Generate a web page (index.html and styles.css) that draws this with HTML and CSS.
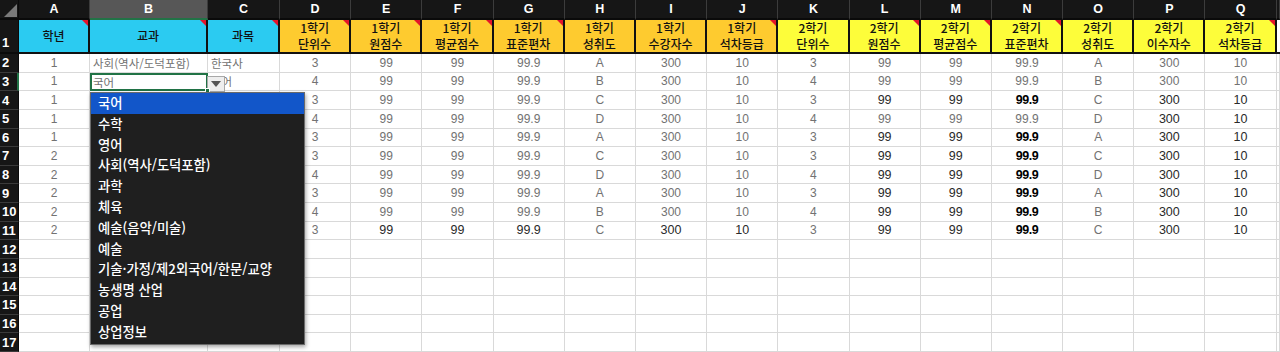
FILE: index.html
```html
<!DOCTYPE html>
<html lang="ko">
<head>
<meta charset="utf-8">
<title>Sheet</title>
<link rel="stylesheet" href="styles.css">
</head>
<body>
<div class="sheet">
  <div class="corner"><svg width="19" height="20" viewBox="0 0 19 20"><polygon points="17,4 17,17 4,17" fill="#7a7a7a"/></svg></div>
  <div class="ch">A</div><div class="ch sel">B</div><div class="ch">C</div><div class="ch">D</div><div class="ch">E</div><div class="ch">F</div><div class="ch">G</div><div class="ch">H</div><div class="ch">I</div><div class="ch">J</div><div class="ch">K</div><div class="ch">L</div><div class="ch">M</div><div class="ch">N</div><div class="ch">O</div><div class="ch">P</div><div class="ch">Q</div><div class="ch"></div>

  <div class="rh r1">1</div>
  <div class="h cy cm">학년</div>
  <div class="h cy cm">교과</div>
  <div class="h cy cm">과목</div>
  <div class="h or cm">1학기<br>단위수</div>
  <div class="h or cm">1학기<br>원점수</div>
  <div class="h or cm">1학기<br>평균점수</div>
  <div class="h or cm">1학기<br>표준편차</div>
  <div class="h or">1학기<br>성취도</div>
  <div class="h or">1학기<br>수강자수</div>
  <div class="h or cm">1학기<br>석차등급</div>
  <div class="h ye">2학기<br>단위수</div>
  <div class="h ye cm">2학기<br>원점수</div>
  <div class="h ye cm">2학기<br>평균점수</div>
  <div class="h ye cm">2학기<br>표준편차</div>
  <div class="h ye">2학기<br>성취도</div>
  <div class="h ye">2학기<br>이수자수</div>
  <div class="h ye cm">2학기<br>석차등급</div>
  <div class="h blank"></div>

  <div class="rh">2</div>
  <div class="c">1</div><div class="c l">사회(역사/도덕포함)</div><div class="c l">한국사</div>
  <div class="c">3</div><div class="c">99</div><div class="c">99</div><div class="c">99.9</div><div class="c">A</div><div class="c">300</div><div class="c">10</div>
  <div class="c">3</div><div class="c">99</div><div class="c">99</div><div class="c">99.9</div><div class="c">A</div><div class="c">300</div><div class="c">10</div><div class="c"></div>

  <div class="rh sel">3</div>
  <div class="c">1</div><div class="c l active">국어<span class="ddbtn"><svg width="10" height="6" viewBox="0 0 10 6"><polygon points="0,0 10,0 5,6" fill="#555"/></svg></span><span class="handle"></span></div><div class="c l">국어</div>
  <div class="c">4</div><div class="c">99</div><div class="c">99</div><div class="c">99.9</div><div class="c">B</div><div class="c">300</div><div class="c">10</div>
  <div class="c">4</div><div class="c">99</div><div class="c">99</div><div class="c">99.9</div><div class="c">B</div><div class="c">300</div><div class="c">10</div><div class="c"></div>

  <div class="rh">4</div>
  <div class="c">1</div><div class="c"></div><div class="c"></div>
  <div class="c">3</div><div class="c">99</div><div class="c">99</div><div class="c">99.9</div><div class="c">C</div><div class="c">300</div><div class="c">10</div>
  <div class="c">3</div><div class="c d">99</div><div class="c d">99</div><div class="c b">99.9</div><div class="c">C</div><div class="c d">300</div><div class="c d">10</div><div class="c"></div>

  <div class="rh">5</div>
  <div class="c">1</div><div class="c"></div><div class="c"></div>
  <div class="c">4</div><div class="c">99</div><div class="c">99</div><div class="c">99.9</div><div class="c">D</div><div class="c">300</div><div class="c">10</div>
  <div class="c">4</div><div class="c">99</div><div class="c">99</div><div class="c">99.9</div><div class="c">D</div><div class="c d">300</div><div class="c d">10</div><div class="c"></div>

  <div class="rh">6</div>
  <div class="c">1</div><div class="c"></div><div class="c"></div>
  <div class="c">3</div><div class="c">99</div><div class="c">99</div><div class="c">99.9</div><div class="c">A</div><div class="c">300</div><div class="c">10</div>
  <div class="c">3</div><div class="c d">99</div><div class="c d">99</div><div class="c b">99.9</div><div class="c">A</div><div class="c d">300</div><div class="c d">10</div><div class="c"></div>

  <div class="rh">7</div>
  <div class="c">2</div><div class="c"></div><div class="c"></div>
  <div class="c">3</div><div class="c">99</div><div class="c">99</div><div class="c">99.9</div><div class="c">C</div><div class="c">300</div><div class="c">10</div>
  <div class="c">3</div><div class="c d">99</div><div class="c d">99</div><div class="c b">99.9</div><div class="c">C</div><div class="c d">300</div><div class="c d">10</div><div class="c"></div>

  <div class="rh">8</div>
  <div class="c">2</div><div class="c"></div><div class="c"></div>
  <div class="c">4</div><div class="c">99</div><div class="c">99</div><div class="c">99.9</div><div class="c">D</div><div class="c">300</div><div class="c">10</div>
  <div class="c">4</div><div class="c d">99</div><div class="c d">99</div><div class="c b">99.9</div><div class="c">D</div><div class="c d">300</div><div class="c d">10</div><div class="c"></div>

  <div class="rh">9</div>
  <div class="c">2</div><div class="c"></div><div class="c"></div>
  <div class="c">3</div><div class="c">99</div><div class="c">99</div><div class="c">99.9</div><div class="c">A</div><div class="c">300</div><div class="c">10</div>
  <div class="c">3</div><div class="c d">99</div><div class="c d">99</div><div class="c b">99.9</div><div class="c">A</div><div class="c d">300</div><div class="c d">10</div><div class="c"></div>

  <div class="rh">10</div>
  <div class="c">2</div><div class="c"></div><div class="c"></div>
  <div class="c">4</div><div class="c">99</div><div class="c">99</div><div class="c">99.9</div><div class="c">B</div><div class="c">300</div><div class="c">10</div>
  <div class="c">4</div><div class="c d">99</div><div class="c d">99</div><div class="c b">99.9</div><div class="c">B</div><div class="c d">300</div><div class="c d">10</div><div class="c"></div>

  <div class="rh">11</div>
  <div class="c">2</div><div class="c"></div><div class="c"></div>
  <div class="c">3</div><div class="c d">99</div><div class="c d">99</div><div class="c d">99.9</div><div class="c">C</div><div class="c d">300</div><div class="c d">10</div>
  <div class="c">3</div><div class="c d">99</div><div class="c d">99</div><div class="c b">99.9</div><div class="c">C</div><div class="c d">300</div><div class="c d">10</div><div class="c"></div>

  <div class="rh">12</div>
  <div class="c"></div><div class="c"></div><div class="c"></div><div class="c"></div><div class="c"></div><div class="c"></div><div class="c"></div><div class="c"></div><div class="c"></div><div class="c"></div><div class="c"></div><div class="c"></div><div class="c"></div><div class="c"></div><div class="c"></div><div class="c"></div><div class="c"></div><div class="c"></div>
  <div class="rh">13</div>
  <div class="c"></div><div class="c"></div><div class="c"></div><div class="c"></div><div class="c"></div><div class="c"></div><div class="c"></div><div class="c"></div><div class="c"></div><div class="c"></div><div class="c"></div><div class="c"></div><div class="c"></div><div class="c"></div><div class="c"></div><div class="c"></div><div class="c"></div><div class="c"></div>
  <div class="rh">14</div>
  <div class="c"></div><div class="c"></div><div class="c"></div><div class="c"></div><div class="c"></div><div class="c"></div><div class="c"></div><div class="c"></div><div class="c"></div><div class="c"></div><div class="c"></div><div class="c"></div><div class="c"></div><div class="c"></div><div class="c"></div><div class="c"></div><div class="c"></div><div class="c"></div>
  <div class="rh">15</div>
  <div class="c"></div><div class="c"></div><div class="c"></div><div class="c"></div><div class="c"></div><div class="c"></div><div class="c"></div><div class="c"></div><div class="c"></div><div class="c"></div><div class="c"></div><div class="c"></div><div class="c"></div><div class="c"></div><div class="c"></div><div class="c"></div><div class="c"></div><div class="c"></div>
  <div class="rh">16</div>
  <div class="c"></div><div class="c"></div><div class="c"></div><div class="c"></div><div class="c"></div><div class="c"></div><div class="c"></div><div class="c"></div><div class="c"></div><div class="c"></div><div class="c"></div><div class="c"></div><div class="c"></div><div class="c"></div><div class="c"></div><div class="c"></div><div class="c"></div><div class="c"></div>
  <div class="rh">17</div>
  <div class="c"></div><div class="c"></div><div class="c"></div><div class="c"></div><div class="c"></div><div class="c"></div><div class="c"></div><div class="c"></div><div class="c"></div><div class="c"></div><div class="c"></div><div class="c"></div><div class="c"></div><div class="c"></div><div class="c"></div><div class="c"></div><div class="c"></div><div class="c"></div>
</div>

<ul class="list">
  <li class="hi">국어</li>
  <li>수학</li>
  <li>영어</li>
  <li>사회(역사/도덕포함)</li>
  <li>과학</li>
  <li>체육</li>
  <li>예술(음악/미술)</li>
  <li>예술</li>
  <li>기술·가정/제2외국어/한문/교양</li>
  <li>농생명 산업</li>
  <li>공업</li>
  <li>상업정보</li>
</ul>
</body>
</html>
```

FILE: styles.css
```css
* { box-sizing: border-box; margin: 0; padding: 0; }
html, body { width: 1280px; height: 352px; overflow: hidden; }
body {
  background: #ffffff;
  font-family: "Liberation Sans", "Noto Sans CJK KR", sans-serif;
  position: relative;
}

.sheet {
  display: grid;
  grid-template-columns: 19px 71px 118px 72px repeat(14, 71.2px) 1fr;
  grid-template-rows: 20px 34px repeat(16, 18.625px);
}

.corner {
  background: #161616;
  border-right: 1px solid #0a0a0a;
  border-bottom: 2px solid #0a0a0a;
  line-height: 0;
}

.ch {
  background: #161616;
  color: #ffffff;
  font-weight: bold;
  font-size: 12.5px;
  display: flex;
  align-items: center;
  justify-content: center;
  border-right: 1px solid #3c3c3c;
  border-bottom: 2px solid #0a0a0a;
}
.ch.sel {
  background: #575757;
  border-bottom: 2px solid #217346;
}

.rh {
  background: #161616;
  color: #ffffff;
  font-weight: bold;
  font-size: 13px;
  display: flex;
  align-items: center;
  padding-left: 2px;
  border-bottom: 1px solid #3a3a3a;
  border-right: 1px solid #0a0a0a;
}
.rh.r1 {
  align-items: flex-end;
  padding-bottom: 2px;
  border-bottom: 2px solid #0a0a0a;
}
.rh.sel { border-right: 2px solid #217346; }

.h {
  display: flex;
  align-items: center;
  justify-content: center;
  text-align: center;
  font-family: "Noto Sans CJK KR", sans-serif;
  font-size: 12px;
  font-weight: 500;
  line-height: 16px;
  color: #111111;
  border-right: 2px solid #111111;
  border-bottom: 2px solid #111111;
  position: relative;
}
.cy { background: #2bcbf1; }
.or { background: #fecb2f; }
.ye { background: #fdfd3a; }
.h.blank { background: #ffffff; border-right: none; border-bottom: 2px solid #111111; }
.cm::after {
  content: "";
  position: absolute;
  top: 0;
  right: 0;
  border-top: 6px solid #e3142a;
  border-left: 6px solid transparent;
}

.c {
  border-right: 1px solid #d9d9d9;
  border-bottom: 1px solid #d9d9d9;
  color: #727272;
  font-size: 12px;
  display: flex;
  align-items: center;
  justify-content: center;
  white-space: nowrap;
  overflow: hidden;
}
.c.l {
  justify-content: flex-start;
  padding-left: 3px;
  font-family: "Noto Sans CJK KR", sans-serif;
  font-size: 11.5px;
}
.c.d { color: #2a2a2a; font-size: 12.5px; }
.c.b {
  color: #000000;
  font-size: 12.5px;
  font-weight: bold;
  letter-spacing: -0.5px;
}

.c.active {
  position: relative;
  overflow: visible;
  z-index: 2;
  border: 2px solid #217346;
  padding-left: 1px;
}
.ddbtn {
  position: absolute;
  right: -19px;
  top: 1px;
  width: 18px;
  height: 16px;
  background: #eeeeee;
  border: 1px solid #a8a8a8;
  display: flex;
  align-items: center;
  justify-content: center;
}
.handle {
  position: absolute;
  right: -4px;
  bottom: -4px;
  width: 5px;
  height: 5px;
  background: #217346;
  border: 1px solid #ffffff;
}

.list {
  list-style: none;
  position: absolute;
  left: 90px;
  top: 92px;
  width: 215px;
  height: 253px;
  background: #1f1f1f;
  border: 1px solid #6a6a6a;
  box-shadow: 1px 2px 4px rgba(0, 0, 0, 0.35);
  z-index: 5;
}
.list li {
  height: 20.8px;
  line-height: 20.8px;
  padding-left: 7px;
  color: #ffffff;
  font-family: "Noto Sans CJK KR", sans-serif;
  font-size: 13.3px;
  font-weight: 500;
  white-space: nowrap;
}
.list li.hi { background: #1256c9; }
```
